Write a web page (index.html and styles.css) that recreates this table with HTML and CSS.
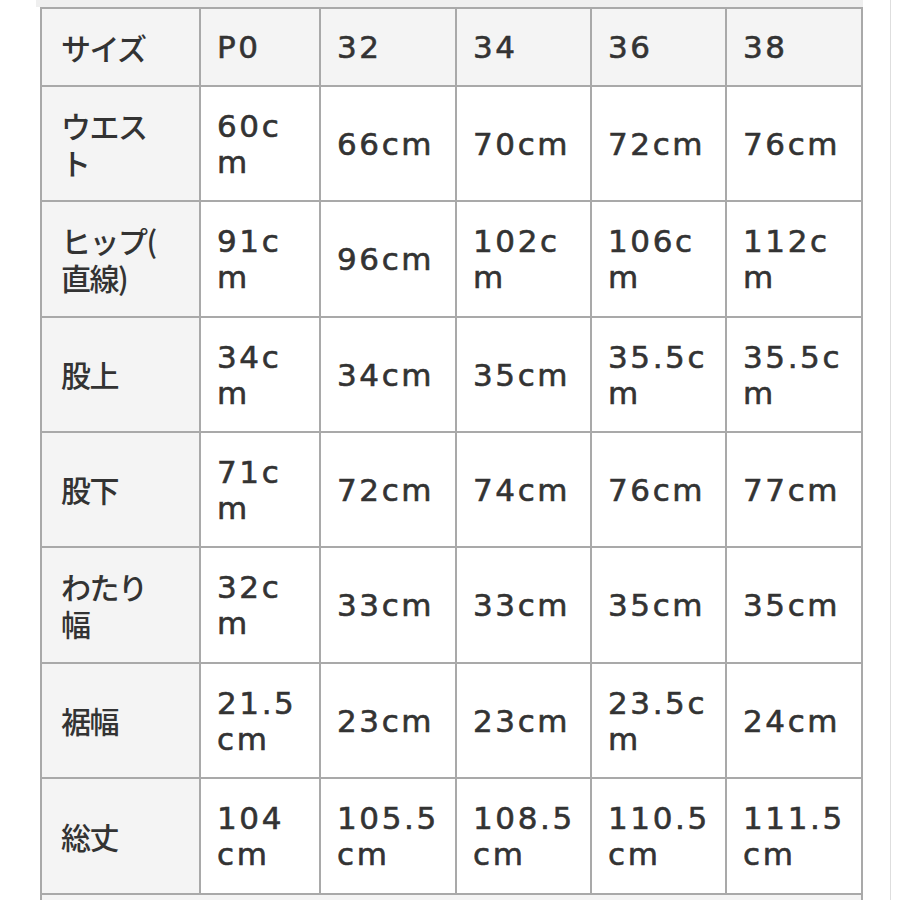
FILE: index.html
```html
<!DOCTYPE html>
<html lang="ja">
<head>
<meta charset="utf-8">
<title>サイズ表</title>
<link rel="stylesheet" href="styles.css">
</head>
<body>
<div class="frame">
  <div class="band"></div>
  <table class="size-table">
    <colgroup>
      <col class="c1"><col class="c2"><col class="c3"><col class="c4"><col class="c5"><col class="c6">
    </colgroup>
    <tbody>
      <tr class="head">
        <th>サイズ</th><td>P0</td><td>32</td><td>34</td><td>36</td><td>38</td>
      </tr>
      <tr class="r115">
        <th>ウエス<br>ト</th><td>60c<br>m</td><td>66cm</td><td>70cm</td><td>72cm</td><td>76cm</td>
      </tr>
      <tr class="r116">
        <th>ヒップ(<br>直線)</th><td>91c<br>m</td><td>96cm</td><td>102c<br>m</td><td>106c<br>m</td><td>112c<br>m</td>
      </tr>
      <tr class="r115">
        <th>股上</th><td>34c<br>m</td><td>34cm</td><td>35cm</td><td>35.5c<br>m</td><td>35.5c<br>m</td>
      </tr>
      <tr class="r115">
        <th>股下</th><td>71c<br>m</td><td>72cm</td><td>74cm</td><td>76cm</td><td>77cm</td>
      </tr>
      <tr class="r116">
        <th>わたり<br>幅</th><td>32c<br>m</td><td>33cm</td><td>33cm</td><td>35cm</td><td>35cm</td>
      </tr>
      <tr class="r115">
        <th>裾幅</th><td>21.5<br>cm</td><td>23cm</td><td>23cm</td><td>23.5c<br>m</td><td>24cm</td>
      </tr>
      <tr class="r116">
        <th>総丈</th><td>104<br>cm</td><td>105.5<br>cm</td><td>108.5<br>cm</td><td>110.5<br>cm</td><td>111.5<br>cm</td>
      </tr>
      <tr class="tail">
        <td colspan="6" class="tail-cell"></td>
      </tr>
    </tbody>
  </table>
</div>
</body>
</html>
```

FILE: styles.css
```css
html, body {
  margin: 0;
  padding: 0;
  background: #ffffff;
}

body {
  font-family: "DejaVu Sans", "Noto Sans CJK JP", sans-serif;
  color: #333333;
}

.frame {
  margin-left: 36px;
  width: 854px;
  min-height: 900px;
  border-right: 1px solid #dedede;
}

.band {
  height: 7px;
  width: 827px;
  background: #efefef;
}

.size-table {
  margin-left: 4px;
  width: 823px;
  table-layout: fixed;
  border-collapse: separate;
  border-spacing: 0;
  border-left: 2px solid #a9a9a9;
  border-top: 2px solid #a9a9a9;
}

.c1 { width: 159px; }
.c2 { width: 120px; }
.c3 { width: 136px; }
.c4 { width: 135px; }
.c5 { width: 135px; }
.c6 { width: 136px; }

.size-table th,
.size-table td {
  border-right: 2px solid #a9a9a9;
  border-bottom: 2px solid #a9a9a9;
  vertical-align: middle;
  text-align: left;
  white-space: nowrap;
  line-height: 36px;
  padding: 0 0 0 16px;
}

.size-table td {
  background: #ffffff;
  font-family: "DejaVu Sans", "Noto Sans CJK JP", sans-serif;
  font-size: 31px;
  letter-spacing: 2.6px;
  -webkit-text-stroke: 0.6px #333333;
}

.size-table th {
  background: #f4f4f4;
  font-family: "Noto Sans CJK JP", "DejaVu Sans", sans-serif;
  font-weight: 500;
  font-size: 30px;
  letter-spacing: -1.5px;
  line-height: 37px;
  padding-left: 19px;
}

.size-table .head td {
  background: #f4f4f4;
}

.head { height: 78px; }
.r115 { height: 115px; }
.r116 { height: 116px; }
.tail { height: 30px; }

.size-table .tail-cell {
  background: #f4f4f4;
}
```
